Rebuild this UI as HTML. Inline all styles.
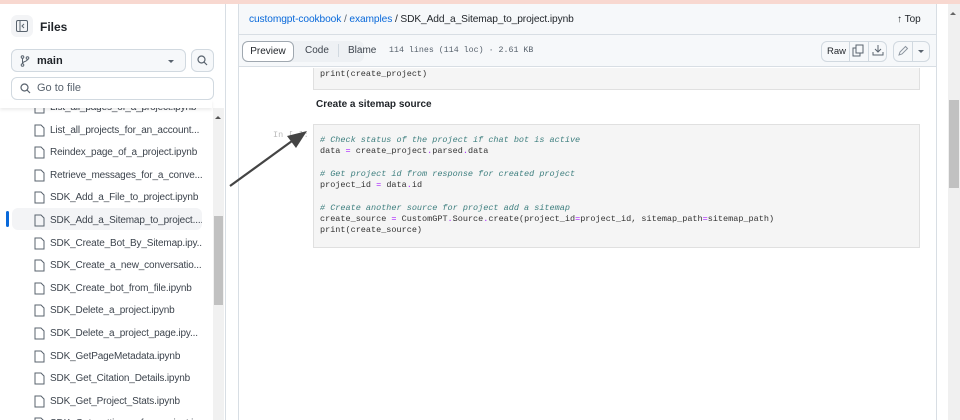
<!DOCTYPE html>
<html><head><style>
*{box-sizing:border-box;margin:0;padding:0}
html,body{width:960px;height:420px;overflow:hidden}
body{background:#fff;font-family:"Liberation Sans",sans-serif;position:relative;color:#1f2328}
.abs{position:absolute}
.mono{font-family:"Liberation Mono",monospace}
.file{position:absolute;left:34px;font-size:10px;letter-spacing:-0.15px;color:#3d444d;white-space:nowrap}
.file svg{position:absolute;left:0;top:0}
.file span{position:absolute;left:16px;top:1px}
.code{font-size:8.5px;line-height:11.3px;color:#333;white-space:pre}
.c{color:#408080;font-style:italic}
.o{color:#aa22ff}
</style></head><body>
<div class="abs" style="left:0;top:0;width:960px;height:4px;background:#f8d8d0"></div>
<div class="abs" style="left:225px;top:4px;width:1px;height:416px;background:#d8dee4"></div>
<div class="abs" style="left:11px;top:15px;width:22px;height:22px;border-radius:6px;background:#f3f4f6"></div>
<svg class="abs" style="left:16px;top:20px" width="12" height="12" viewBox="0 0 12 12"><rect x="0.5" y="0.5" width="11" height="11" rx="1.5" fill="none" stroke="#59636e"/><line x1="4" y1="1" x2="4" y2="11" stroke="#59636e"/><path d="M8 4 L6 6 L8 8" fill="none" stroke="#59636e"/></svg>
<div class="abs" style="left:40px;top:20px;font-size:12px;font-weight:bold;color:#1f2328">Files</div>
<div class="abs" style="left:11px;top:49px;width:175px;height:23px;border:1px solid #d1d9e0;border-radius:6px;background:#f6f8fa"></div>
<svg class="abs" style="left:20px;top:55px" width="10" height="12" viewBox="0 0 10 12"><circle cx="2.5" cy="2" r="1.3" fill="none" stroke="#59636e"/><circle cx="2.5" cy="10" r="1.3" fill="none" stroke="#59636e"/><circle cx="7.5" cy="3" r="1.3" fill="none" stroke="#59636e"/><path d="M2.5 3.3V8.7M7.5 4.3C7.5 7 2.5 6 2.5 8.5" fill="none" stroke="#59636e"/></svg>
<div class="abs" style="left:37px;top:55px;font-size:11px;font-weight:bold">main</div>
<div class="abs" style="left:168px;top:60px;border:3px solid transparent;border-top:3px solid #59636e"></div>
<div class="abs" style="left:191px;top:49px;width:23px;height:23px;border:1px solid #d1d9e0;border-radius:6px;background:#f6f8fa"></div>
<svg class="abs" style="left:197px;top:55px" width="11" height="11" viewBox="0 0 11 11"><circle cx="4.5" cy="4.5" r="3.5" fill="none" stroke="#59636e" stroke-width="1.2"/><line x1="7" y1="7" x2="10" y2="10" stroke="#59636e" stroke-width="1.2"/></svg>
<div class="abs" style="left:213px;top:108px;width:11px;height:312px;background:#f1f1f1"></div>
<div class="abs" style="left:215px;top:113px;border:3px solid transparent;border-bottom:3px solid #555"></div>
<div class="abs" style="left:214px;top:216px;width:9px;height:89px;background:#c1c1c1"></div>
<div class="abs" style="left:12px;top:208px;width:190px;height:22px;background:#f3f4f6;border-radius:6px"></div>
<div class="abs" style="left:6px;top:211px;width:3px;height:16px;background:#0969da;border-radius:2px"></div>
<div id="files"></div>
<div class="abs" style="left:0;top:100px;width:212px;height:8px;background:#fff;box-shadow:0 2px 3px rgba(0,0,0,.08)"></div>
<div class="abs" style="left:11px;top:77px;width:203px;height:23px;border:1px solid #d1d9e0;border-radius:6px;background:#fff"></div>
<svg class="abs" style="left:20px;top:83px" width="11" height="11" viewBox="0 0 11 11"><circle cx="4.5" cy="4.5" r="3.5" fill="none" stroke="#59636e" stroke-width="1.2"/><line x1="7" y1="7" x2="10" y2="10" stroke="#59636e" stroke-width="1.2"/></svg>
<div class="abs" style="left:37px;top:82px;font-size:11px;color:#59636e">Go to file</div>
<div class="abs" style="left:238px;top:4px;width:1px;height:416px;background:#d8dee4"></div>
<div class="abs" style="left:936px;top:4px;width:1px;height:416px;background:#d8dee4"></div>
<div class="abs" style="left:239px;top:4px;width:697px;height:63px;background:#f6f8fa;border-bottom:1px solid #d8dee4"></div>
<div class="abs" style="left:239px;top:34px;width:697px;height:1px;background:#d8dee4"></div>
<div class="abs" style="left:249px;top:14px;font-size:10.2px;letter-spacing:-0.1px;color:#0969da">customgpt-cookbook <span style="color:#59636e">/</span> examples <span style="color:#1f2328">/ SDK_Add_a_Sitemap_to_project.ipynb</span></div>
<div class="abs" style="left:897px;top:14px;font-size:10px;color:#1f2328">↑ Top</div>
<div class="abs" style="left:242px;top:41px;width:122px;height:21px;background:#eef1f4;border-radius:6px"></div>
<div class="abs" style="left:242px;top:41px;width:52px;height:21px;background:#fff;border:1px solid #a0a8b0;border-radius:6px;font-size:10px;text-align:center;line-height:19px">Preview</div>
<div class="abs" style="left:305px;top:45px;font-size:10px;color:#3d444d">Code</div>
<div class="abs" style="left:338px;top:44px;width:1px;height:13px;background:#d1d9e0"></div>
<div class="abs" style="left:348px;top:45px;font-size:10px;color:#3d444d">Blame</div>
<div class="abs mono" style="left:389px;top:46px;font-size:8.3px;color:#59636e">114 lines (114 loc) · 2.61 KB</div>
<div class="abs" style="left:821px;top:41px;width:66px;height:21px;border:1px solid #d1d9e0;border-radius:6px;background:#f6f8fa"></div>
<div class="abs" style="left:849px;top:42px;width:1px;height:19px;background:#d1d9e0"></div>
<div class="abs" style="left:868px;top:42px;width:1px;height:19px;background:#d1d9e0"></div>
<div class="abs" style="left:827px;top:46px;font-size:9.5px">Raw</div>
<svg class="abs" style="left:852px;top:44px" width="13" height="13" viewBox="0 0 13 13"><rect x="1" y="4" width="7" height="8" fill="none" stroke="#59636e"/><rect x="4" y="1" width="7" height="8" fill="#f6f8fa" stroke="#59636e"/></svg>
<svg class="abs" style="left:872px;top:44px" width="12" height="12" viewBox="0 0 12 12"><path d="M6 1V8M3 5L6 8L9 5M1 8V11H11V8" fill="none" stroke="#59636e"/></svg>
<div class="abs" style="left:893px;top:41px;width:37px;height:21px;border:1px solid #d1d9e0;border-radius:6px;background:#f6f8fa"></div>
<div class="abs" style="left:912px;top:42px;width:1px;height:19px;background:#d1d9e0"></div>
<svg class="abs" style="left:897px;top:45px" width="12" height="12" viewBox="0 0 12 12"><path d="M2 10L3 7L8.5 1.5L10.5 3.5L5 9Z" fill="none" stroke="#8c959f"/></svg>
<div class="abs" style="left:918px;top:50px;border:3px solid transparent;border-top:3px solid #59636e"></div>
<div class="abs" style="left:313px;top:68px;width:607px;height:22px;background:#f5f5f5;border:1px solid #e0e0e0;border-top:none"></div>
<div class="abs mono code" style="left:320px;top:69px">print(create_project)</div>
<div class="abs" style="left:316px;top:99px;font-size:10px;font-weight:bold">Create a sitemap source</div>
<div class="abs mono" style="left:273px;top:130px;font-size:8.5px;color:#bbb">In [ ]:</div>
<div class="abs" style="left:313px;top:124px;width:607px;height:124px;background:#f5f5f5;border:1px solid #e0e0e0"></div>
<div class="abs mono code" style="left:320px;top:135px"><span class="c"># Check status of the project if chat bot is active</span>
data <span class="o">=</span> create_project<span class="o">.</span>parsed<span class="o">.</span>data

<span class="c"># Get project id from response for created project</span>
project_id <span class="o">=</span> data<span class="o">.</span>id

<span class="c"># Create another source for project add a sitemap</span>
create_source <span class="o">=</span> CustomGPT<span class="o">.</span>Source<span class="o">.</span>create(project_id<span class="o">=</span>project_id, sitemap_path<span class="o">=</span>sitemap_path)
print(create_source)</div>
<svg class="abs" style="left:0;top:0" width="960" height="420"><line x1="230" y1="186" x2="292" y2="141" stroke="#444" stroke-width="2.2"/><polygon points="307,131 287,136 296,148" fill="#444"/></svg>
<div class="abs" style="left:948px;top:4px;width:12px;height:416px;background:#f0f0f0"></div>
<div class="abs" style="left:950px;top:9px;border:3px solid transparent;border-bottom:3px solid #666"></div>
<div class="abs" style="left:949px;top:100px;width:10px;height:88px;background:#c1c1c1"></div>
<script>
var n=["List_all_pages_of_a_project.ipynb","List_all_projects_for_an_account...","Reindex_page_of_a_project.ipynb","Retrieve_messages_for_a_conve...","SDK_Add_a_File_to_project.ipynb","SDK_Add_a_Sitemap_to_project....","SDK_Create_Bot_By_Sitemap.ipy...","SDK_Create_a_new_conversatio...","SDK_Create_bot_from_file.ipynb","SDK_Delete_a_project.ipynb","SDK_Delete_a_project_page.ipy...","SDK_GetPageMetadata.ipynb","SDK_Get_Citation_Details.ipynb","SDK_Get_Project_Stats.ipynb","SDK_Get_settings_of_a_project.ipynb"];
var h="";n.forEach(function(s,i){var y=101+i*22.6;h+='<div class="file" style="top:'+y+'px;height:16px;width:168px;overflow:hidden"><svg width="11" height="13" viewBox="0 0 11 13"><path d="M1 1H7L10 4V12H1Z" fill="none" stroke="#59636e"/></svg><span>'+s+'</span></div>';});
document.getElementById("files").innerHTML=h;
</script>
</body></html>
